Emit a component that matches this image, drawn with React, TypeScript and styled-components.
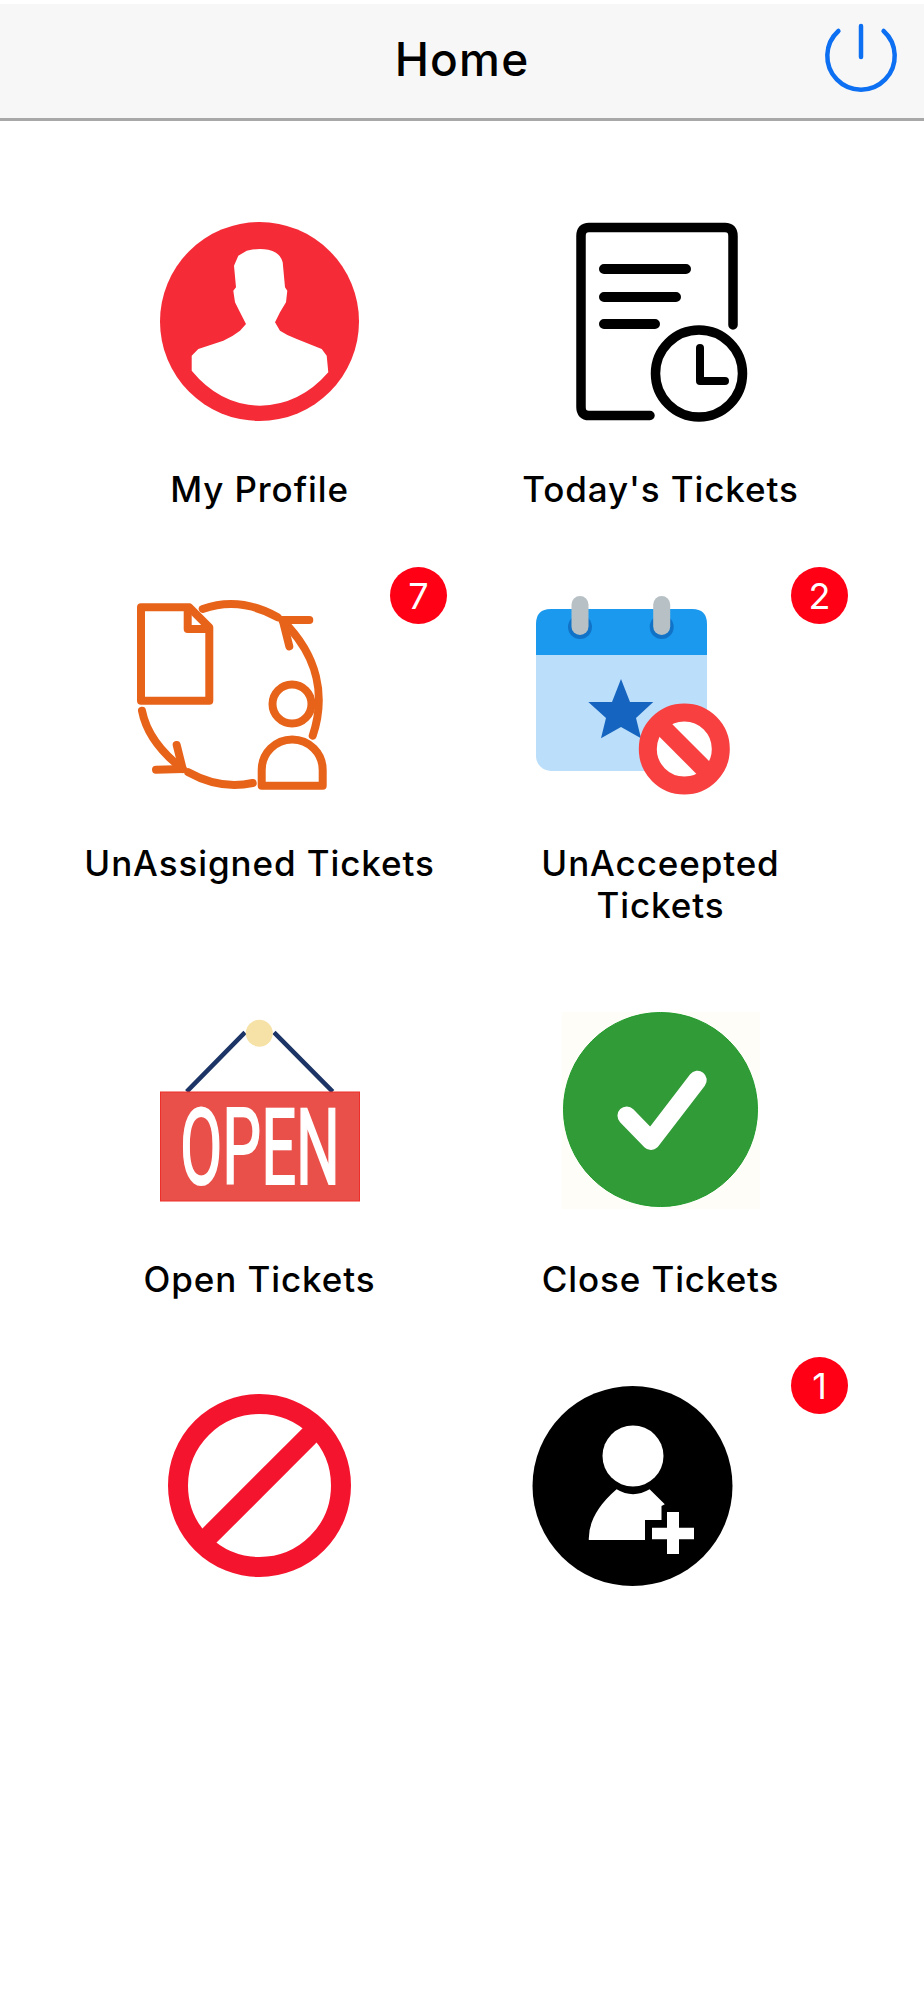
import React from 'react'
import styled, { createGlobalStyle } from 'styled-components'

const GlobalStyle = createGlobalStyle`
  html, body {
    margin: 0;
    padding: 0;
    background: #ffffff;
    font-family: Inter, "Liberation Sans", sans-serif;
    color: #000000;
  }
`

const Page = styled.div`
  width: 924px;
  min-height: 2000px;
  padding-top: 4px;
  box-sizing: border-box;
`

const Header = styled.header`
  display: grid;
  grid-template-columns: 1fr auto 1fr;
  align-items: center;
  height: 114px;
  background: #f7f7f7;
  border-bottom: 3px solid #a8a8a8;
`

const Title = styled.h1`
  grid-column: 2;
  margin: 0 0 5px;
  font-size: 46px;
  font-weight: 500;
  letter-spacing: 1.2px;
  line-height: 1;
`

const PowerButton = styled.button`
  grid-column: 3;
  justify-self: end;
  display: flex;
  margin-right: 25px;
  padding: 0;
  border: 0;
  background: none;
`

const TileGrid = styled.main`
  display: grid;
  grid-template-columns: repeat(2, 401px);
  row-gap: 57px;
  padding: 72px 0 0 59px;
`

const Tile = styled.section`
  position: relative;
  display: flex;
  flex-direction: column;
  align-items: center;
  padding-top: 29px;
`

const IconRow = styled.div<{ $hasBadge: boolean }>`
  display: flex;
  width: 200px;
  height: 200px;
  margin-right: ${({ $hasBadge }) => ($hasBadge ? '56px' : '0')};
  filter: blur(0.5px);
`

const Label = styled.div`
  margin-top: 46px;
  max-width: 356px;
  font-size: 35px;
  font-weight: 500;
  letter-spacing: 0.9px;
  line-height: 42px;
  text-align: center;
`

const Badge = styled.span`
  position: absolute;
  top: 0;
  right: 13px;
  display: flex;
  align-items: center;
  justify-content: center;
  width: 57px;
  height: 57px;
  border-radius: 50%;
  background: #ff0015;
  color: #ffffff;
  font-size: 36px;
  font-weight: 400;
`

const Canvas = ({ children }: { children: React.ReactNode }) => (
  <svg width="200" height="200" viewBox="0 0 200 200" fill="none" style={{ overflow: 'visible' }}>
    {children}
  </svg>
)

const PowerIcon = () => (
  <svg width="76" height="76" viewBox="0 0 76 76" fill="none" stroke="#0d6ff2" strokeWidth="4.5" strokeLinecap="round">
    <path d="M38 3 V34" />
    <path d="M15.4 8 A33.7 33.7 0 1 0 60.6 8" />
  </svg>
)

const ProfileIcon = () => (
  <Canvas>
    <circle cx="99.5" cy="99.5" r="99.5" fill="#f52b37" />
    <path
      fill="#fff"
      d="M86.7 28.7 Q98 26 108.3 27.7 Q120 30 122.7 40.3 L125 65.3 L127.3 68.7 L126 80.3 L120 90.3 L115 100.3 L120 108.7 Q128 114 136.7 117 L161.7 127 L166.7 133.7 L168.3 150.3 Q140 183 100 183.7 Q60 183 31.7 148.7 L31.7 133.7 L38.3 127 L63.3 118.7 Q72 115 80 108.7 L86 102 L80 90.3 L75 80.3 L73.3 68.7 L76 65.3 L74 43.7 L78.3 33.7 Z"
    />
  </Canvas>
)

const TodayIcon = () => (
  <Canvas>
    <g stroke="#000" strokeLinecap="round" strokeLinejoin="round">
      <path strokeWidth="9.5" d="M89 193.5 H28 Q20 193.5 20 185 V14 Q20 5.5 28 5.5 H164 Q172 5.5 172 14 V103" />
      <path strokeWidth="10" d="M43 47 H125 M43 75 H115 M43 102 H94" />
      <circle strokeWidth="9.5" cx="138" cy="151.5" r="43.5" />
      <path strokeWidth="8" d="M139 126 V159 H164" />
    </g>
  </Canvas>
)

const UnassignedIcon = () => (
  <Canvas>
    <g stroke="#e8631a" strokeWidth="8" strokeLinecap="round" strokeLinejoin="round">
      <path d="M9 11.3 H57.3 L77.3 31.3 V104.7 H9 Z" />
      <path d="M55.7 13 V33 H77" />
      <path d="M70.7 13 Q108 0 145.7 21.3" />
      <path d="M180.7 139.7 C194 100 186 60 150.7 24.7" />
      <path d="M177.3 24 H150.7 L157.3 50.3" />
      <path d="M10 114.7 Q16 146 50.7 173" />
      <path d="M24 173.7 L50.7 173 L44.7 149" />
      <path d="M56.3 176.3 Q88 194 120.7 187" />
      <circle cx="160" cy="108" r="19.5" />
      <path d="M129.7 189.7 V174 A30.5 30.5 0 0 1 190.7 174 V189.7 Z" />
    </g>
  </Canvas>
)

const UnacceptedIcon = () => (
  <Canvas>
    <rect x="3" y="13" width="171" height="162" rx="15" fill="#bbdefa" />
    <path d="M3 59 V28 Q3 13 18 13 H159 Q174 13 174 28 V59 Z" fill="#1a99ee" />
    <circle cx="47" cy="31" r="12" fill="#1173c7" />
    <circle cx="128.7" cy="31" r="12" fill="#1173c7" />
    <rect x="38.5" y="0" width="17" height="39" rx="8.5" fill="#b7c1c5" />
    <rect x="120.2" y="0" width="17" height="39" rx="8.5" fill="#b7c1c5" />
    <path fill="#1565c0" d="M88 83 L97 106 L120.3 106 L103 122 L108 142.3 L88 131 L68 142.3 L73 122 L55.3 106 L79 106 Z" />
    <circle cx="151.3" cy="153" r="36.5" fill="#fff" stroke="#f94040" strokeWidth="18" />
    <path d="M125.5 127.2 L177.1 178.8" stroke="#f94040" strokeWidth="18" />
  </Canvas>
)

const OpenIcon = () => (
  <Canvas>
    <path d="M85 20.3 L26.7 79.7 M114 20.3 L172.7 79.7" stroke="#1c3566" strokeWidth="4.5" />
    <circle cx="99.3" cy="21.3" r="13.5" fill="#f6e2a7" />
    <rect x="0.5" y="80" width="199" height="109" fill="#ea504a" stroke="#ee2e28" />
    <text
      x="20"
      y="172"
      textLength="160"
      lengthAdjust="spacingAndGlyphs"
      fontFamily='Roboto, "Liberation Sans", sans-serif'
      fontSize="105"
      fill="#fff"
      stroke="#fff"
      strokeWidth="2"
    >
      OPEN
    </text>
  </Canvas>
)

const CloseIcon = () => (
  <Canvas>
    <rect x="1" y="0" width="198" height="197" fill="#fffdf7" />
    <circle cx="99.5" cy="97.5" r="97" fill="#319b37" stroke="#1f9a2a" strokeWidth="1" />
    <path d="M65.7 103.7 L90 128.7 L136.5 68" stroke="#fff" strokeWidth="18.5" strokeLinecap="round" strokeLinejoin="round" />
  </Canvas>
)

const BlockedIcon = () => (
  <Canvas>
    <circle cx="99.5" cy="99.5" r="81.5" stroke="#f5142e" strokeWidth="20" />
    <path d="M41.5 157.5 L157.5 41.5" stroke="#f5142e" strokeWidth="20" />
  </Canvas>
)

const AddUserIcon = () => (
  <Canvas>
    <circle cx="99.5" cy="100" r="100" fill="#000" />
    <circle cx="100" cy="70" r="30.5" fill="#fff" />
    <path
      fill="#fff"
      d="M83.6 103.3 Q100 113 116.6 103.3 L131.8 118.3 L128.5 120 V134 H112 V154 H55.8 Q55 128 83.6 103.3 Z"
    />
    <path fill="#fff" d="M134 126 H146 V141.7 H161 V153.3 H146 V168 H134 V153.3 H119 V141.7 H134 Z" />
  </Canvas>
)

const tiles: { label?: string; badge?: number; icon: React.ComponentType }[] = [
  { label: 'My Profile', icon: ProfileIcon },
  { label: "Today's Tickets", icon: TodayIcon },
  { label: 'UnAssigned Tickets', badge: 7, icon: UnassignedIcon },
  { label: 'UnAcceepted Tickets', badge: 2, icon: UnacceptedIcon },
  { label: 'Open Tickets', icon: OpenIcon },
  { label: 'Close Tickets', icon: CloseIcon },
  { icon: BlockedIcon },
  { badge: 1, icon: AddUserIcon },
]

const App = () => (
  <Page>
    <GlobalStyle />
    <Header>
      <Title>Home</Title>
      <PowerButton aria-label="Log out">
        <PowerIcon />
      </PowerButton>
    </Header>
    <TileGrid>
      {tiles.map(({ label, badge, icon: Icon }, index) => (
        <Tile key={index}>
          <IconRow $hasBadge={badge !== undefined}>
            <Icon />
          </IconRow>
          {label && <Label>{label}</Label>}
          {badge !== undefined && <Badge>{badge}</Badge>}
        </Tile>
      ))}
    </TileGrid>
  </Page>
)

export default App
